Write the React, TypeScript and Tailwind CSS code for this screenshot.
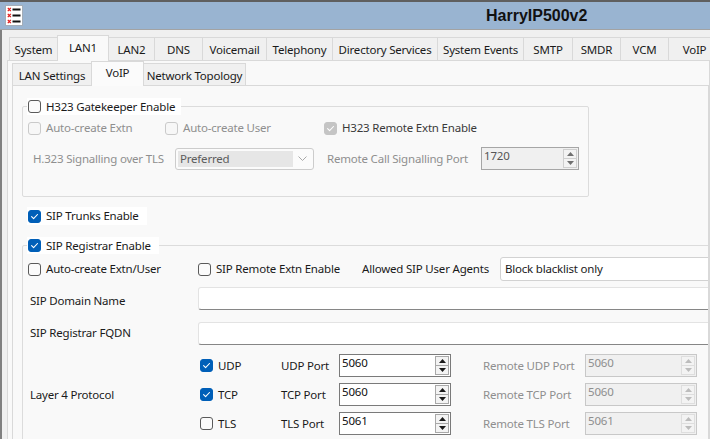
import React from "react";

const Check = () => (
  <svg width="9" height="9" viewBox="0 0 9 9" fill="none">
    <path d="M1.6 4.7 L3.6 6.7 L7.5 2.5" stroke="white" strokeWidth="1.1" strokeLinecap="round" strokeLinejoin="round" />
  </svg>
);

function Box({ checked = false, disabled = false }: { checked?: boolean; disabled?: boolean }) {
  let cls = "bg-[#fbfbfb] border-[#5a5a5a]";
  if (checked && !disabled) cls = "bg-[#005fb8] border-[#005fb8]";
  else if (checked && disabled) cls = "bg-[#c5c5c5] border-[#c5c5c5]";
  else if (disabled) cls = "bg-[#f7f7f7] border-[#cacaca]";
  return (
    <span className={`w-[13px] h-[13px] shrink-0 rounded-[3px] border flex items-center justify-center ${cls}`}>
      {checked && <Check />}
    </span>
  );
}

function CB({
  label,
  checked,
  disabled,
  textCls = "text-[#1a1a1a]",
  className = "",
}: {
  label: string;
  checked?: boolean;
  disabled?: boolean;
  textCls?: string;
  className?: string;
}) {
  return (
    <div className={`flex items-center gap-[5px] ${className}`}>
      <Box checked={checked} disabled={disabled} />
      <span className={`whitespace-nowrap ${textCls}`}>{label}</span>
    </div>
  );
}

function Tri({ up, color }: { up: boolean; color: string }) {
  return (
    <svg width="7" height="4" viewBox="0 0 7 4">
      {up ? <path d="M0 4 L3.5 0 L7 4 Z" fill={color} /> : <path d="M0 0 L3.5 4 L7 0 Z" fill={color} />}
    </svg>
  );
}

function Spin({ value, w, variant }: { value: string; w: string; variant: "on" | "off" | "ro" }) {
  const outer =
    variant === "on"
      ? "bg-white border-[#7a7a7a] text-[#111]"
      : variant === "ro"
      ? "bg-[#f0f0f0] border-[#a6a6a6] text-[#555]"
      : "bg-[#f0f0f0] border-[#c8c8c8] text-[#8e8e8e]";
  const btn =
    variant === "on"
      ? "border-[#a8a8a8] bg-[#f3f3f3]"
      : variant === "ro"
      ? "border-[#cfcfcf] bg-[#f3f3f3]"
      : "border-[#dedede] bg-[#f3f3f3]";
  const tri = variant === "on" ? "#1a1a1a" : variant === "ro" ? "#707070" : "#bcbcbc";
  return (
    <div className={`${w} h-[23px] border flex ${outer}`}>
      <span className="flex-1 pl-[2px] leading-[16px]">{value}</span>
      <div className="flex flex-col w-[14px] my-[1px] mr-[1px]">
        <div className={`h-[10px] border flex items-center justify-center ${btn}`}>
          <Tri up color={tri} />
        </div>
        <div className={`h-[10px] border border-t-0 flex items-center justify-center ${btn}`}>
          <Tri up={false} color={tri} />
        </div>
      </div>
    </div>
  );
}

const mainTabs = [
  { label: "System", w: "w-[49px]" },
  { label: "LAN1", w: "w-[52px]", sel: true },
  { label: "LAN2", w: "w-[47px]" },
  { label: "DNS", w: "w-[49px]" },
  { label: "Voicemail", w: "w-[65px]" },
  { label: "Telephony", w: "w-[67px]" },
  { label: "Directory Services", w: "w-[106px]" },
  { label: "System Events", w: "w-[87px]" },
  { label: "SMTP", w: "w-[50px]" },
  { label: "SMDR", w: "w-[49px]" },
  { label: "VCM", w: "w-[49px]" },
  { label: "VoIP", w: "w-[53px]" },
];

const subTabs = [
  { label: "LAN Settings", w: "w-[80px]" },
  { label: "VoIP", w: "w-[53px]", sel: true },
  { label: "Network Topology", w: "w-[103px]" },
];

function AppIcon() {
  const rows = [4.5, 10.5, 16.5];
  return (
    <svg width="18" height="21" viewBox="0 0 18 21">
      <rect x="0.5" y="0.5" width="17" height="20" fill="#fff" stroke="#a3adb8" />
      {rows.map((y) => (
        <g key={y}>
          <path d={`M2.8 ${y - 1.6} L5.8 ${y + 1.6} M5.8 ${y - 1.6} L2.8 ${y + 1.6}`} stroke="#e31b1b" strokeWidth="1.3" />
          <rect x="7.5" y={y - 1} width="8" height="2" fill="#111" />
        </g>
      ))}
    </svg>
  );
}

export default function App() {
  const dis = "text-[#8f8f8f]";
  return (
    <div className="w-[710px] h-[439px] overflow-hidden bg-[#f0f0f0] flex flex-col font-['Noto_Sans',sans-serif] text-[11.5px] tracking-[-0.2px] text-[#1a1a1a]">
      {/* Title bar */}
      <div className="h-[30px] shrink-0 bg-[#99b4d1] border-t-2 border-t-[#5f5f5f] border-b border-b-[#a3a3a3] flex items-center">
        <div className="ml-[5px]">
          <AppIcon />
        </div>
        <span className="ml-[463px] font-['Liberation_Sans',Arial,sans-serif] font-bold text-[16px] tracking-normal text-[#111] whitespace-nowrap">
          HarryIP500v2
        </span>
      </div>

      {/* Body */}
      <div className="shrink-0 flex flex-col border-l-2 border-[#808080] pt-[5px] h-[480px]">
        {/* main tabs */}
        <div className="relative z-10 -mb-px flex items-end h-[26px] pl-[7px] shrink-0">
          {mainTabs.map((t, i) =>
            t.sel ? (
              <div
                key={t.label}
                className={`${t.w} ${i > 0 ? "-ml-px" : ""} h-[26px] shrink-0 bg-[#f9f9f9] border border-b-0 border-[#d9d9d9] flex items-center justify-center pb-[2px] relative z-10 whitespace-nowrap`}
              >
                {t.label}
              </div>
            ) : (
              <div
                key={t.label}
                className={`${t.w} ${i > 0 ? "-ml-px" : ""} h-[24px] shrink-0 bg-[#f0f0f0] border border-[#d9d9d9] flex items-center justify-center pt-[1px] whitespace-nowrap`}
              >
                {t.label}
              </div>
            )
          )}
        </div>

        {/* outer panel */}
        <div className="ml-[5px] flex-1 border border-[#d9d9d9] bg-[#f9f9f9] flex flex-col">
          <div className="relative z-10 -mb-px flex items-end h-[25px] pl-[4px] shrink-0">
            {subTabs.map((t, i) =>
              t.sel ? (
                <div
                  key={t.label}
                  className={`${t.w} ${i > 0 ? "-ml-px" : ""} h-[25px] shrink-0 bg-[#fbfbfb] border border-b-0 border-[#d9d9d9] flex items-center justify-center pb-[3px] relative z-10 whitespace-nowrap`}
                >
                  {t.label}
                </div>
              ) : (
                <div
                  key={t.label}
                  className={`${t.w} ${i > 0 ? "-ml-px" : ""} h-[23px] shrink-0 bg-[#f0f0f0] border border-[#d9d9d9] flex items-center justify-center pt-[2px] whitespace-nowrap`}
                >
                  {t.label}
                </div>
              )
            )}
          </div>

          {/* sub panel */}
          <div className="ml-[4px] flex-1 border border-[#d9d9d9] bg-[#f9f9f9] pl-[9px] pt-[12px] overflow-hidden">
            {/* H323 group */}
            <fieldset className="w-[567px] border border-[#dcdcdc] rounded-[2px]">
              <legend className="ml-[4px] bg-white">
                <div className="flex h-[17px] items-center gap-[5px] pl-[1px] pr-[6px]">
                  <Box />
                  <span className="whitespace-nowrap">H323 Gatekeeper Enable</span>
                </div>
              </legend>
              <div className="pl-[5px] pt-[4px] pb-[26px]">
                <div className="flex h-[18px] items-center">
                  <CB label="Auto-create Extn" disabled textCls={dis} className="w-[137px]" />
                  <CB label="Auto-create User" disabled textCls={dis} className="w-[159px]" />
                  <CB label="H323 Remote Extn Enable" checked disabled textCls="text-[#3a3a3a]" />
                </div>
                <div className="flex h-[23px] items-center mt-[10px] pl-[5px]">
                  <span className={`w-[142px] whitespace-nowrap ${dis}`}>H.323 Signalling over TLS</span>
                  <div className="w-[139px] h-[22px] border border-[#cccccc] rounded-[3px] bg-[#fbfbfb] flex items-stretch p-[2px]">
                    <div className="flex-1 bg-[#e6e6e6] text-[#5c5c5c] pl-[2px] leading-[16px]">Preferred</div>
                    <div className="w-[18px] flex items-center justify-center">
                      <svg width="9" height="5" viewBox="0 0 9 5">
                        <path d="M0.5 0.5 L4.5 4.5 L8.5 0.5" stroke="#a8a8a8" fill="none" strokeWidth="1" />
                      </svg>
                    </div>
                  </div>
                  <span className={`ml-[13px] w-[154px] whitespace-nowrap ${dis}`}>Remote Call Signalling Port</span>
                  <Spin value="1720" w="w-[98px]" variant="ro" />
                </div>
              </div>
            </fieldset>

            {/* SIP trunks */}
            <div className="mt-[10px] ml-[5px] inline-flex h-[18px] items-center gap-[5px] bg-white pl-[1px] pr-[8px]">
              <Box checked />
              <span className="whitespace-nowrap">SIP Trunks Enable</span>
            </div>

            {/* SIP registrar group */}
            <fieldset className="mt-[12px] w-[800px] border border-[#dcdcdc] rounded-[2px] pb-[40px]">
              <legend className="ml-[4px] bg-white">
                <div className="flex h-[17px] items-center gap-[5px] pl-[1px] pr-[8px]">
                  <Box checked />
                  <span className="whitespace-nowrap">SIP Registrar Enable</span>
                </div>
              </legend>
              <div className="pl-[5px] pt-[3px]">
                <div className="flex h-[24px] items-center">
                  <CB label="Auto-create Extn/User" className="w-[170px]" />
                  <CB label="SIP Remote Extn Enable" className="w-[164px]" />
                  <span className="w-[138px] whitespace-nowrap">Allowed SIP User Agents</span>
                  <div className="w-[260px] h-[24px] border border-[#d2d2d2] rounded-[3px] bg-white flex items-center pl-[4px]">
                    Block blacklist only
                  </div>
                </div>

                <div className="flex items-start h-[23px] mt-[6px] pl-[2px]">
                  <span className="w-[168px] pt-[6px] leading-[16px] whitespace-nowrap">SIP Domain Name</span>
                  <div className="w-[560px] h-[23px] bg-white border border-[#e3e3e3] border-b-[#868686] rounded-[3px]" />
                </div>

                <div className="flex items-start h-[23px] mt-[12px] pl-[2px]">
                  <span className="w-[168px] pt-[3px] leading-[16px] whitespace-nowrap">SIP Registrar FQDN</span>
                  <div className="w-[560px] h-[23px] bg-white border border-[#e3e3e3] border-b-[#868686] rounded-[3px]" />
                </div>

                <div className="flex items-center mt-[9px] pl-[2px]">
                  <span className="w-[168px] whitespace-nowrap">Layer 4 Protocol</span>
                  <div className="flex flex-col gap-[6px]">
                    {[
                      { p: "UDP", v: "5060", c: true },
                      { p: "TCP", v: "5060", c: true },
                      { p: "TLS", v: "5061", c: false },
                    ].map((r) => (
                      <div key={r.p} className="flex items-center h-[23px] pl-[2px]">
                        <CB label={r.p} checked={r.c} className="w-[81px]" />
                        <span className="w-[58px] whitespace-nowrap">{r.p} Port</span>
                        <Spin value={r.v} w="w-[112px]" variant="on" />
                        <span className={`ml-[32px] w-[102px] whitespace-nowrap ${dis}`}>Remote {r.p} Port</span>
                        <Spin value={r.v} w="w-[112px]" variant="off" />
                      </div>
                    ))}
                  </div>
                </div>
              </div>
            </fieldset>
          </div>
        </div>
      </div>
    </div>
  );
}
